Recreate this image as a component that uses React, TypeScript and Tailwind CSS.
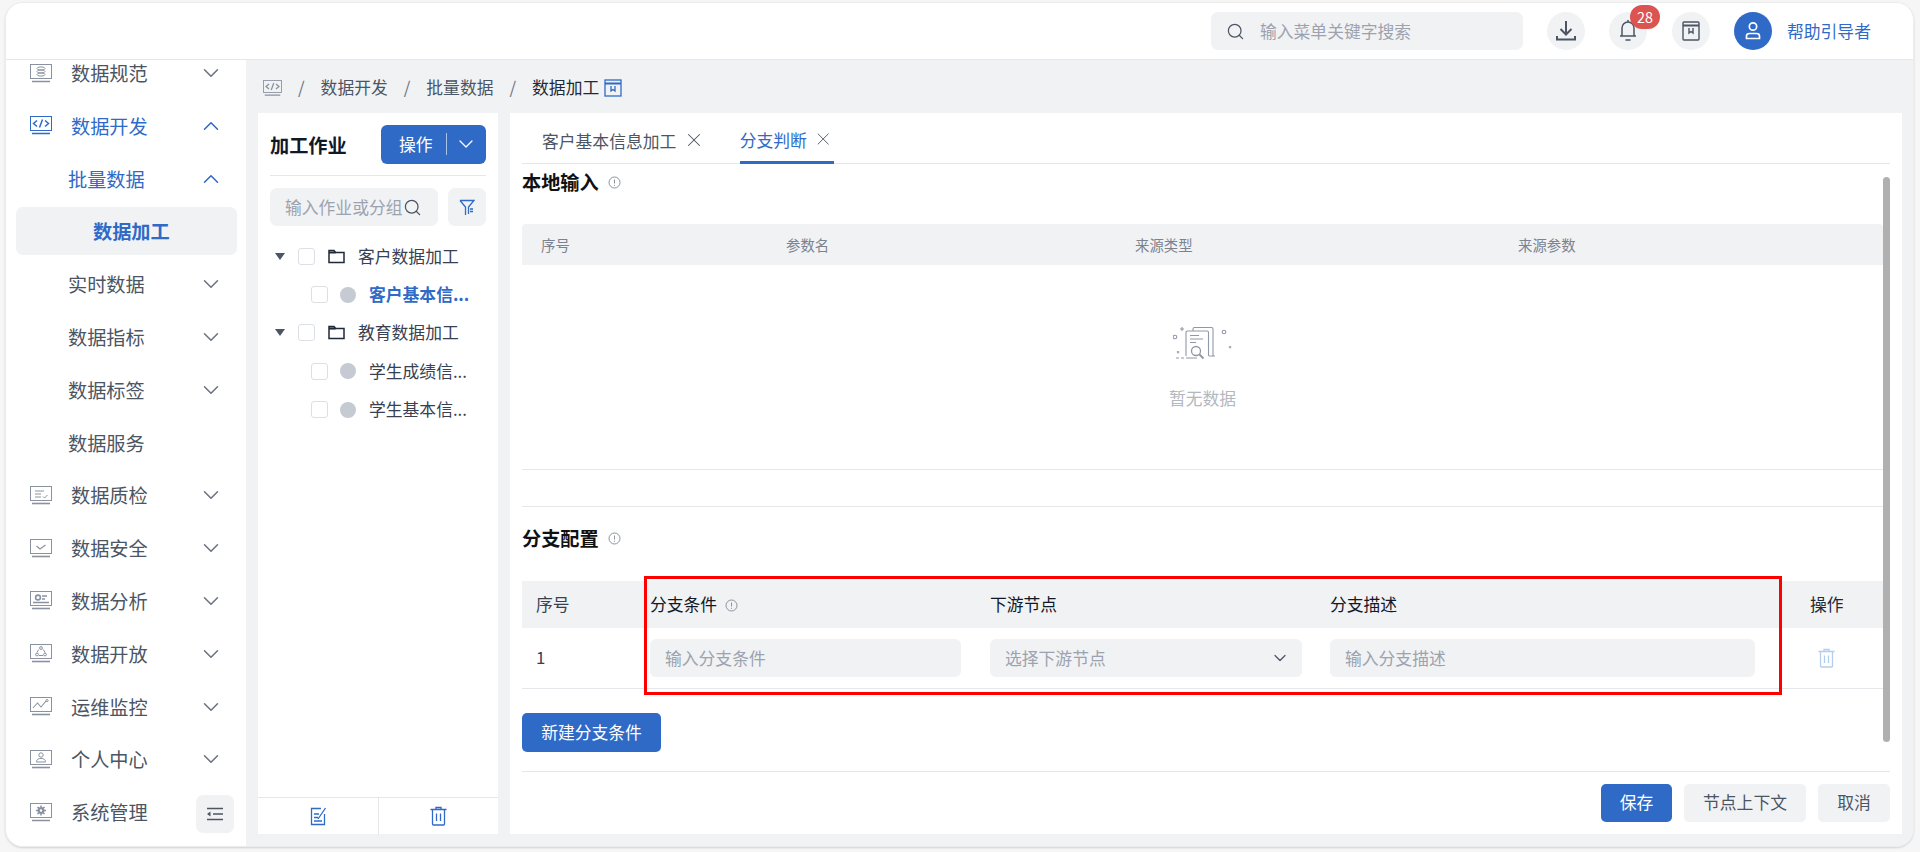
import { ChevronDown, ChevronUp, Search, X } from "lucide-react";
import type { ReactNode } from "react";

const BLUE = "#2f6ac7";

function Screen({ children, color = "#8a92a0", width = 22 }: { children?: ReactNode; color?: string; width?: number }) {
  return (
    <svg width={width} height={(width * 19) / 22} viewBox="0 0 22 19" fill="none" stroke={color} strokeWidth="1" className="shrink-0">
      <rect x="0.5" y="0.5" width="21" height="14" />
      <path d="M2 17.5h18" strokeWidth="1.6" />
      {children}
    </svg>
  );
}

const glyphs: Record<string, ReactNode> = {
  spec: (
    <>
      <ellipse cx="11" cy="4.5" rx="4" ry="1.6" />
      <ellipse cx="11" cy="7.5" rx="4" ry="1.6" />
      <ellipse cx="11" cy="10.5" rx="4" ry="1.6" />
    </>
  ),
  code: <path d="M7 4.5 3.5 7.5 7 10.5M15 4.5l3.5 3-3.5 3M12.5 3.5l-3 8" strokeWidth="1.5" />,
  quality: <path d="M5 5h9M5 8h6M5 11h6M13 10.5l1.5 1.5 3-3" />,
  safe: <path d="m6.5 7 3.5 3 5.5-4" strokeWidth="1.2" />,
  analysis: (
    <>
      <circle cx="8" cy="6.5" r="2.4" strokeWidth="1.6" />
      <path d="M12 5h5M12 8h3M3 11.5h16" strokeWidth="1.6" />
    </>
  ),
  open: (
    <>
      <circle cx="11" cy="4" r="1.4" />
      <circle cx="7" cy="10.5" r="1.4" />
      <circle cx="15" cy="10.5" r="1.4" />
      <path d="M8.7 5.5 7 8.5M13.3 5.5 15 8.5M9 11.5h4" />
    </>
  ),
  monitor: (
    <>
      <path d="m3 11 4.5-5 3.5 4 5-6" strokeWidth="1.1" />
      <circle cx="17" cy="3.6" r="1.1" />
    </>
  ),
  person: (
    <>
      <circle cx="11" cy="5" r="2.2" />
      <path d="M6.5 12c0-2.5 2-3.6 4.5-3.6s4.500 1.100 4.500 3.600z" />
    </>
  ),
  gear: (
    <>
      <circle cx="11" cy="7.500" r="2.300" strokeWidth="2.200" />
      <path d="M11 2.500v2M11 10.500v2M6 7.500h2M14 7.500h2M7.500 4l1.400 1.400M13.100 9.600l1.400 1.400M14.500 4l-1.400 1.400M8.900 9.600 7.500 11" strokeWidth="1.500" />
    </>
  ),
};

type NavRow = {
  label: string;
  icon?: string;
  open?: boolean;
  active?: boolean;
  arrow?: boolean;
};

const nav: NavRow[] = [
  { label: "数据规范", icon: "spec", arrow: true },
  { label: "数据开发", icon: "code", arrow: true, open: true, active: true },
  { label: "批量数据", arrow: true, open: true, active: true },
  { label: "实时数据", arrow: true },
  { label: "数据指标", arrow: true },
  { label: "数据标签", arrow: true },
  { label: "数据服务" },
  { label: "数据质检", icon: "quality", arrow: true },
  { label: "数据安全", icon: "safe", arrow: true },
  { label: "数据分析", icon: "analysis", arrow: true },
  { label: "数据开放", icon: "open", arrow: true },
  { label: "运维监控", icon: "monitor", arrow: true },
  { label: "个人中心", icon: "person", arrow: true },
];

function SideItem({ row }: { row: NavRow }) {
  const color = row.active ? "text-[#2f6ac7]" : "text-[#4b5563]";
  return (
    <div className={`flex h-[52.8px] items-center pr-[27px] text-[19.2px] ${color} ${row.icon ? "pl-[24px]" : "pl-[62px]"}`}>
      {row.icon && (
        <span className="mr-[19px] flex">
          <Screen color={row.active ? BLUE : "#8a92a0"}>{glyphs[row.icon]}</Screen>
        </span>
      )}
      <span className="flex-1 pt-[1px]">{row.label}</span>
      {row.arrow &&
        (row.open ? (
          <ChevronUp size={26} strokeWidth={1.4} className="-mr-[5px] text-[#2f6ac7]" />
        ) : (
          <ChevronDown size={26} strokeWidth={1.4} className="-mr-[5px] text-[#6b7280]" />
        ))}
    </div>
  );
}

function Sidebar() {
  return (
    <aside className="h-full w-[240px] shrink-0 overflow-hidden bg-white">
      <div className="mt-[-13.4px]">
        {nav.slice(0, 3).map((r) => (
          <SideItem key={r.label} row={r} />
        ))}
        <div className="flex h-[52.8px] items-center">
          <div className="ml-[10px] flex h-[48px] w-[221px] items-center rounded-[7px] bg-[#f1f2f4] pl-[77px] pt-[1px] text-[19.2px] font-bold text-[#2f6ac7]">
            数据加工
          </div>
        </div>
        {nav.slice(3).map((r) => (
          <SideItem key={r.label} row={r} />
        ))}
        <div className="flex h-[52.8px] items-center pl-[24px] pr-[12px] text-[19.2px] text-[#4b5563]">
          <span className="mr-[19px] flex">
            <Screen>{glyphs.gear}</Screen>
          </span>
          <span className="flex-1 pt-[1px]">系统管理</span>
          <button className="mt-[4px] flex h-[38px] w-[38px] items-center justify-center rounded-[7px] bg-[#f1f2f4]">
            <svg width="18" height="14" viewBox="0 0 18 14" fill="none" stroke="#4b5563" strokeWidth="1.6">
              <path d="M1 1.500h16M7 7h10M1 12.500h16" />
              <path d="M4.500 4.500v5L1 7z" fill="#4b5563" stroke="none" />
            </svg>
          </button>
        </div>
      </div>
    </aside>
  );
}

function Header() {
  return (
    <header className="flex h-[57px] shrink-0 items-center border-b border-[#e5e7eb] bg-white pl-[1205px]">
      <div className="flex h-[38px] w-[312px] items-center rounded-[7px] bg-[#f1f2f4] pl-[15px]">
        <Search size={19} strokeWidth={1.6} className="text-[#4b5563]" />
        <input
          placeholder="输入菜单关键字搜索"
          className="ml-[15px] min-w-0 flex-1 bg-transparent pt-[2px] text-[16.8px] outline-none placeholder:text-[#9ca3af]"
        />
      </div>
      <span className="ml-[24px] flex h-[38px] w-[38px] items-center justify-center rounded-full bg-[#f1f2f4]">
        <svg width="22" height="22" viewBox="0 0 22 22" fill="none" stroke="#4b5563" strokeWidth="2">
          <path d="M11 1v13M5.500 9 11 14.500 16.500 9M2 16v3.500h18V16" />
        </svg>
      </span>
      <span className="relative ml-[24px] flex h-[38px] w-[38px] items-center justify-center rounded-full bg-[#f1f2f4]">
        <svg width="20" height="24" viewBox="0 0 20 24" fill="none" stroke="#4b5563" strokeWidth="1.5">
          <path d="M2 17h16M4 17V9a6 6 0 0 1 12 0v8M10 1v2M7.500 21h5" />
        </svg>
        <span className="absolute left-[21px] top-[-7px] flex h-[24px] w-[30px] items-center justify-center rounded-full bg-[#db5452] text-[14.4px] text-white">
          28
        </span>
      </span>
      <span className="ml-[25px] flex h-[38px] w-[38px] items-center justify-center rounded-full bg-[#f1f2f4]">
        <svg width="18" height="20" viewBox="0 0 18 20" fill="none" stroke="#4b5563" strokeWidth="1.4">
          <rect x="1" y="1" width="16" height="18" rx="1" />
          <path d="M1 4.500h16" strokeWidth="2" />
          <path d="M7 7v5l2-1.500 2 1.500V7" />
        </svg>
      </span>
      <span className="ml-[24px] flex h-[38px] w-[38px] items-center justify-center rounded-full bg-[#2f6ac7]">
        <svg width="20" height="20" viewBox="0 0 20 20" fill="none" stroke="#fff" strokeWidth="1.700">
          <circle cx="10" cy="5.500" r="3.700" />
          <path d="M3.500 17.500v-2.500c0-1.500 1.500-2.500 3-2.500h7c1.500 0 3 1 3 2.500v2.500z" />
        </svg>
      </span>
      <span className="ml-[15px] pt-[1px] text-[16.8px] text-[#2f6ac7]">帮助引导者</span>
    </header>
  );
}

function Breadcrumb() {
  return (
    <div className="flex h-[53px] items-center pl-[5px] pt-[3px] text-[16.8px] text-[#4b5563]">
      <Screen width={19}>{glyphs.code}</Screen>
      <span className="mx-[16px] text-[#6b7280]">/</span>
      <span>数据开发</span>
      <span className="mx-[16px] text-[#6b7280]">/</span>
      <span>批量数据</span>
      <span className="mx-[16px] text-[#6b7280]">/</span>
      <span className="text-[#1f2937]">数据加工</span>
      <svg width="18" height="18" viewBox="0 0 18 18" fill="none" stroke={BLUE} strokeWidth="1.300" className="ml-[5px]">
        <rect x="1" y="1" width="16" height="16" />
        <path d="M1 4.500h16" strokeWidth="1.800" />
        <path d="M7 7v5l2-1.500 2 1.500V7" />
      </svg>
    </div>
  );
}

function Check() {
  return <span className="h-[17px] w-[17px] shrink-0 rounded-[3px] border border-[#dcdfe5] bg-white" />;
}

function Folder({ label }: { label: string }) {
  return (
    <div className="flex h-[38.4px] items-center pl-[17px] text-[16.8px] text-[#374151]">
      <span className="h-0 w-0 border-x-[5.5px] border-t-[7px] border-x-transparent border-t-[#4b5563]" />
      <span className="ml-[13px] flex">
        <Check />
      </span>
      <svg width="17" height="15" viewBox="0 0 17 15" fill="none" stroke="#1f2937" strokeWidth="1.500" className="ml-[13px]">
        <path d="M1 13.500V1.500h5l1.500 2H16v10z" />
        <path d="M1 3.500h6.500" strokeWidth="2.200" />
      </svg>
      <span className="ml-[13px]">{label}</span>
    </div>
  );
}

function Leaf({ label, active }: { label: string; active?: boolean }) {
  return (
    <div className="flex h-[38.4px] items-center pl-[53px] text-[16.8px]">
      <Check />
      <span className="ml-[12px] h-[16px] w-[16px] rounded-full bg-[#c5cad3]" />
      <span className={`ml-[13px] ${active ? "font-bold text-[#2f6ac7]" : "text-[#374151]"}`}>{label}</span>
    </div>
  );
}

function TreePanel() {
  return (
    <section className="flex w-[240px] shrink-0 flex-col bg-white">
      <div className="mx-[12px] flex h-[63px] items-center justify-between border-b border-[#e5e7eb]">
        <span className="pt-[2px] text-[19.2px] font-bold text-[#111827]">加工作业</span>
        <button className="flex h-[39px] w-[105px] items-center rounded-[6px] bg-[#2f6ac7] pl-[18px] text-[16.8px] text-white">
          <span className="pt-[2px]">操作</span>
          <span className="ml-[13px] h-[22px] w-px bg-[#a9c3e8]" />
          <ChevronDown size={24} strokeWidth={1.300} className="ml-[7px]" />
        </button>
      </div>
      <div className="mx-[12px] mt-[12px] flex gap-[10px]">
        <div className="flex h-[38px] w-[168px] items-center rounded-[7px] bg-[#f1f2f4] pl-[15px] pr-[3px]">
          <input
            placeholder="输入作业或分组"
            className="w-[118px] min-w-0 bg-transparent pt-[2px] text-[16.8px] outline-none placeholder:text-[#9ca3af]"
          />
          <Search size={19} strokeWidth={1.600} className="shrink-0 text-[#4b5563]" />
        </div>
        <span className="flex h-[38px] w-[38px] items-center justify-center rounded-[7px] bg-[#f1f2f4]">
          <svg width="16" height="17" viewBox="0 0 16 17" fill="none" stroke={BLUE} strokeWidth="1.300">
            <path d="M1 1.500h14L9.500 8v7M6.500 16V8L1 1.500M11 10h3M11 12.500h3" />
          </svg>
        </span>
      </div>
      <div className="mt-[11px] flex-1">
        <Folder label="客户数据加工" />
        <Leaf label="客户基本信..." active />
        <Folder label="教育数据加工" />
        <Leaf label="学生成绩信..." />
        <Leaf label="学生基本信..." />
      </div>
      <div className="flex h-[37px] border-t border-[#e5e7eb]">
        <span className="flex w-[121px] items-center justify-center border-r border-[#e5e7eb]">
          <svg width="17" height="19" viewBox="0 0 17 19" fill="none" stroke={BLUE} strokeWidth="1.300">
            <path d="M11 1.500H1.500v16h13V7M4 7h5M4 10.500h4M4 14h8M8 12 15.500 1" />
          </svg>
        </span>
        <span className="flex flex-1 items-center justify-center">
          <TrashIcon color={BLUE} />
        </span>
      </div>
    </section>
  );
}

function TrashIcon({ color }: { color: string }) {
  return (
    <svg width="17" height="20" viewBox="0 0 17 20" fill="none" stroke={color} strokeWidth="1.300">
      <path d="M0.500 3.500h16M6 3.500V1.500h5v2M2.500 3.500V18a1 1 0 0 0 1 1h10a1 1 0 0 0 1-1V3.500M6.500 7.500v7.500M10.500 7.500v7.500" />
    </svg>
  );
}

function Info({ className = "" }: { className?: string }) {
  return (
    <svg width="13" height="13" viewBox="0 0 13 13" fill="none" stroke="#8a92a0" strokeWidth="1" className={className}>
      <circle cx="6.500" cy="6.500" r="5.500" />
      <path d="M6.500 3.500v4M6.500 8.800v1" />
    </svg>
  );
}

function EmptyIcon() {
  return (
    <svg width="60" height="36" viewBox="0 0 60 36" fill="none" stroke="#8f98a8" strokeWidth="1.100">
      <path d="M20 5V3a1.500 1.500 0 0 1 1.500-1.500h17A1.500 1.500 0 0 1 40 3v27M36 30h6" />
      <path d="M13 30V6.500A1.500 1.500 0 0 1 14.500 5H34a1.500 1.500 0 0 1 1.500 1.500V30" fill="#fff" />
      <path d="M17 9.500h9M17 13h13M17 16.500h6M8 32h3M3 32h3M13 32h11" />
      <circle cx="23" cy="25" r="4.500" fill="#fff" strokeWidth="1.300" />
      <path d="m26.500 28.500 4 4" strokeWidth="2" />
      <circle cx="2" cy="11" r="1.800" />
      <circle cx="51" cy="6" r="1.800" />
      <path d="M9 1v4M7 3h4M5 25v2.500M3.800 26h2.500M57 20v2.500M55.800 21h2.500" />
    </svg>
  );
}

function InputBox({ placeholder, width, select }: { placeholder: string; width: string; select?: boolean }) {
  return (
    <div className={`flex h-[38px] items-center rounded-[6px] bg-[#f1f2f4] pl-[15px] pr-[12px] ${width}`}>
      <input
        placeholder={placeholder}
        className="min-w-0 flex-1 bg-transparent pt-[2px] text-[16.8px] outline-none placeholder:text-[#9ca3af]"
      />
      {select && <ChevronDown size={20} strokeWidth={1.500} className="shrink-0 text-[#4b5563]" />}
    </div>
  );
}

function BranchTable() {
  return (
    <div className="relative">
      <div className="grid h-[47px] grid-cols-[128px_340px_340px_453px_100px] items-center bg-[#f1f2f4] pt-[1px] text-[16.8px] text-[#111827]">
        <span className="pl-[14px] text-[#374151]">序号</span>
        <span className="flex items-center">
          分支条件
          <Info className="ml-[8px]" />
        </span>
        <span>下游节点</span>
        <span>分支描述</span>
        <span className="pl-[27px] text-[#1f2937]">操作</span>
      </div>
      <div className="grid h-[61px] grid-cols-[128px_340px_340px_453px_100px] items-center border-b border-[#e5e7eb] text-[16.8px]">
        <span className="pl-[14px] text-[#374151]">1</span>
        <InputBox placeholder="输入分支条件" width="w-[311px]" />
        <InputBox placeholder="选择下游节点" width="w-[312px]" select />
        <InputBox placeholder="输入分支描述" width="w-[425px]" />
        <span className="pl-[35px]">
          <TrashIcon color="#b3cdf0" />
        </span>
      </div>
      <div className="pointer-events-none absolute left-[122px] top-[-5px] h-[119px] w-[1138px] border-[3px] border-[#ff0000]" />
    </div>
  );
}

function EditorPanel() {
  return (
    <section className="flex min-w-0 flex-1 flex-col bg-white px-[12px]">
      <div className="flex h-[51px] shrink-0 border-b border-[#e5e7eb] text-[16.8px] text-[#4b5563]">
        <div className="flex h-full items-center whitespace-nowrap pl-[20px] pt-[6px]">
          <span className="pt-[1px]">客户基本信息加工</span>
          <X size={22} strokeWidth={1.100} className="-mt-[2px] ml-[6.5px]" />
        </div>
        <div className="-mb-px ml-[35px] flex h-[51px] w-[94px] items-center whitespace-nowrap border-b-[3px] border-[#2f6ac7] pt-[6px] text-[#2f6ac7]">
          <span className="pt-[1px]">分支判断</span>
          <X size={22} strokeWidth={1.100} className="-mt-[2px] ml-[6.5px] text-[#4b5563]" />
        </div>
      </div>
      <div className="flex min-h-0 flex-1">
        <div className="min-w-0 flex-1">
          <h3 className="flex h-[36px] items-center text-[19.2px] font-bold text-[#111111]">
            <span className="pt-[1px]">本地输入</span>
            <Info className="ml-[9px]" />
          </h3>
          <div className="mt-[24px] grid h-[41px] grid-cols-[264px_349px_383px_1fr] items-center rounded-t-[4px] bg-[#f1f2f4] text-[14.4px] text-[#7b8290]">
            <span className="pl-[19px]">序号</span>
            <span>参数名</span>
            <span>来源类型</span>
            <span>来源参数</span>
          </div>
          <div className="flex h-[205px] flex-col items-center border-b border-[#e5e7eb] pt-[61px]">
            <EmptyIcon />
            <span className="mt-[24px] text-[16.8px] text-[#b3b7c0]">暂无数据</span>
          </div>
          <div className="mt-[36px] border-t border-[#e5e7eb]" />
          <h3 className="flex h-[62px] items-center text-[19.2px] font-bold text-[#111111]">
            <span>分支配置</span>
            <Info className="ml-[9px]" />
          </h3>
          <div className="mt-[12px]">
            <BranchTable />
          </div>
          <button className="mt-[24px] h-[39px] w-[139px] rounded-[5px] bg-[#2f6ac7] text-[16.8px] text-white">新建分支条件</button>
        </div>
        <div className="mb-[29px] mt-[13px] w-[7px] shrink-0 rounded-full bg-[#b0b0b0]" />
      </div>
      <div className="flex h-[63px] shrink-0 justify-end gap-[12px] border-t border-[#e5e7eb] pt-[12px] text-[16.8px]">
        <button className="h-[38px] w-[71px] rounded-[5px] bg-[#2f6ac7] text-white">保存</button>
        <button className="h-[38px] w-[122px] rounded-[5px] bg-[#f1f2f4] text-[#4b5563]">节点上下文</button>
        <button className="h-[38px] w-[72px] rounded-[5px] bg-[#f1f2f4] text-[#4b5563]">取消</button>
      </div>
    </section>
  );
}

export default function App() {
  return (
    <div className="h-[852px] w-[1920px] overflow-hidden bg-[#f6f6f6] pl-[5px] pt-[2px] [font-family:'Noto_Sans_CJK_SC','Noto_Sans',sans-serif]">
      <div className="flex h-[845px] w-[1909px] flex-col overflow-hidden rounded-[18px] border border-[#ececec] shadow-[0_1px_2px_rgba(0,0,0,0.15)]">
        <Header />
        <div className="flex min-h-0 flex-1">
          <Sidebar />
          <main className="flex min-w-0 flex-1 flex-col bg-[#f1f2f4] pl-[12px] pr-[11px]">
            <Breadcrumb />
            <div className="flex h-[721px] gap-[12px]">
              <TreePanel />
              <EditorPanel />
            </div>
          </main>
        </div>
      </div>
    </div>
  );
}
